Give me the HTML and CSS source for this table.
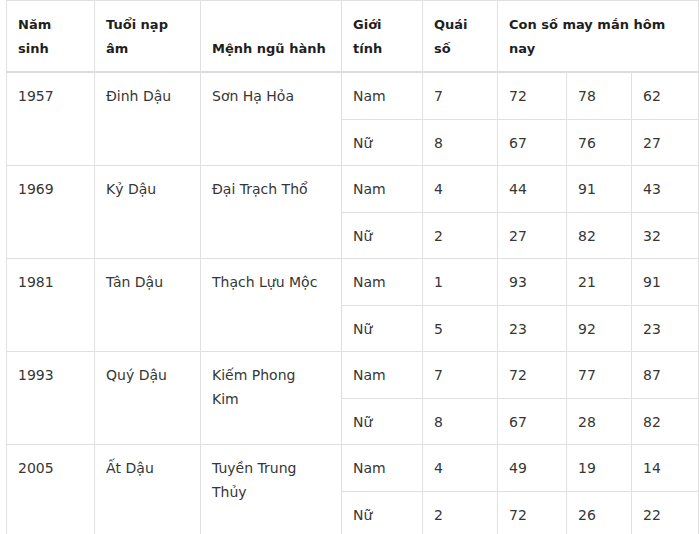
FILE: index.html
```html
<!DOCTYPE html>
<html lang="vi">
<head>
<meta charset="utf-8">
<title>Con số may mắn tuổi Dậu</title>
<link rel="stylesheet" href="styles.css">
</head>
<body>
<div class="wrap">
<table class="lucky">
  <colgroup>
    <col class="c-year"><col class="c-napam"><col class="c-menh"><col class="c-sex"><col class="c-quai"><col class="c-n1"><col class="c-n2"><col class="c-n3">
  </colgroup>
  <thead>
    <tr>
      <th>Năm sinh</th>
      <th>Tuổi nạp âm</th>
      <th class="menh nowrap">Mệnh ngũ hành</th>
      <th>Giới tính</th>
      <th>Quái số</th>
      <th colspan="3">Con số may mắn hôm nay</th>
    </tr>
  </thead>
  <tbody>
    <tr><td rowspan="2">1957</td><td rowspan="2">Đinh Dậu</td><td rowspan="2" class="menh">Sơn Hạ Hỏa</td><td>Nam</td><td>7</td><td>72</td><td>78</td><td>62</td></tr>
    <tr><td>Nữ</td><td>8</td><td>67</td><td>76</td><td>27</td></tr>
    <tr><td rowspan="2">1969</td><td rowspan="2">Kỷ Dậu</td><td rowspan="2" class="menh">Đại Trạch Thổ</td><td>Nam</td><td>4</td><td>44</td><td>91</td><td>43</td></tr>
    <tr><td>Nữ</td><td>2</td><td>27</td><td>82</td><td>32</td></tr>
    <tr><td rowspan="2">1981</td><td rowspan="2">Tân Dậu</td><td rowspan="2" class="menh">Thạch Lựu Mộc</td><td>Nam</td><td>1</td><td>93</td><td>21</td><td>91</td></tr>
    <tr><td>Nữ</td><td>5</td><td>23</td><td>92</td><td>23</td></tr>
    <tr><td rowspan="2">1993</td><td rowspan="2">Quý Dậu</td><td rowspan="2" class="menh">Kiếm Phong Kim</td><td>Nam</td><td>7</td><td>72</td><td>77</td><td>87</td></tr>
    <tr><td>Nữ</td><td>8</td><td>67</td><td>28</td><td>82</td></tr>
    <tr><td rowspan="2">2005</td><td rowspan="2">Ất Dậu</td><td rowspan="2" class="menh">Tuyền Trung Thủy</td><td>Nam</td><td>4</td><td>49</td><td>19</td><td>14</td></tr>
    <tr><td>Nữ</td><td>2</td><td>72</td><td>26</td><td>22</td></tr>
  </tbody>
</table>
</div>
</body>
</html>
```
FILE: styles.css
```css
html, body {
  margin: 0;
  padding: 0;
  background: #ffffff;
}
.wrap {
  padding-left: 6px;
}
.lucky {
  width: 692px;
  table-layout: fixed;
  border-collapse: collapse;
  font-family: "DejaVu Sans", "Noto Sans", sans-serif;
  font-size: 14px;
  line-height: 23.5px;
  color: #363636;
}
.c-year { width: 88px; }
.c-napam { width: 106px; }
.c-menh { width: 141px; }
.c-sex { width: 81px; }
.c-quai { width: 75px; }
.c-n1 { width: 69px; }
.c-n2 { width: 65px; }
.c-n3 { width: 67px; }
.lucky th,
.lucky td {
  border: 1px solid #e0e0e0;
  padding: 12px 12px 10px 11px;
  text-align: left;
}
.lucky th {
  padding-top: 12px;
  padding-bottom: 11px;
  font-size: 13px;
  font-weight: bold;
  color: #1f1f1f;
  vertical-align: bottom;
  border-bottom: 2px solid #dcdcdc;
}
.lucky td {
  vertical-align: top;
}
.lucky .menh {
  padding-right: 18px;
}
.lucky .nowrap {
  white-space: nowrap;
}
```
